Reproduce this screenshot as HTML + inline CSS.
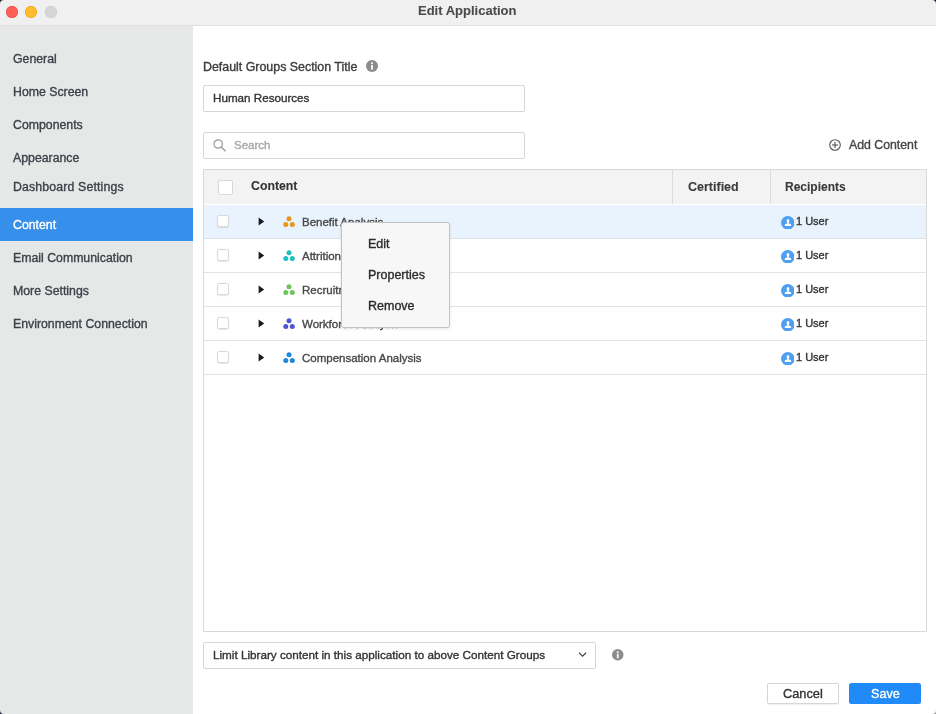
<!DOCTYPE html>
<html><head><meta charset="utf-8"><style>
html,body{margin:0;padding:0;width:936px;height:714px;overflow:hidden;background:#1f2233;}
#w{position:relative;width:936px;height:714px;overflow:hidden;background:#fff;font-family:"Liberation Sans",sans-serif;}
.a{position:absolute;}
.t{position:absolute;white-space:nowrap;line-height:20px;height:20px;will-change:transform;-webkit-text-stroke:0.35px currentColor;}
</style></head><body><div id="w">
<div class="a" style="left:0px;top:0px;width:936px;height:25px;background:#f1f0f1"></div>
<div class="a" style="left:0px;top:25px;width:936px;height:1px;background:#e0dfe0"></div>
<div class="a" style="left:5.60px;top:5.50px;width:12px;height:12px;border-radius:50%;background:#fe5f57;box-shadow:inset 0 0 0 0.5px #e2463f"></div>
<div class="a" style="left:25.20px;top:5.50px;width:12px;height:12px;border-radius:50%;background:#febc2e;box-shadow:inset 0 0 0 0.5px #e1a116"></div>
<div class="a" style="left:44.90px;top:5.50px;width:12px;height:12px;border-radius:50%;background:#d7d6d7;box-shadow:inset 0 0 0 0.5px #c8c7c8"></div>
<div class="t" style="left:417.60px;top:1.20px;font-size:13px;color:#4b4b4b;font-weight:bold;-webkit-text-stroke:0.1px #4b4b4b">Edit Application</div>
<div class="a" style="left:0px;top:26px;width:193px;height:688px;background:#e6e7e7"></div>
<div class="a" style="left:0px;top:208px;width:193px;height:32.5px;background:#3690eb"></div>
<div class="t" style="left:13.00px;top:48.74px;font-size:12.3px;color:#3d4048;font-weight:normal;">General</div>
<div class="t" style="left:13.00px;top:81.94px;font-size:12.3px;color:#3d4048;font-weight:normal;">Home Screen</div>
<div class="t" style="left:13.00px;top:115.04px;font-size:12.3px;color:#3d4048;font-weight:normal;">Components</div>
<div class="t" style="left:13.00px;top:147.94px;font-size:12.3px;color:#3d4048;font-weight:normal;">Appearance</div>
<div class="t" style="left:13.00px;top:177.14px;font-size:12.3px;color:#3d4048;font-weight:normal;letter-spacing:0.15px">Dashboard Settings</div>
<div class="t" style="left:13.00px;top:214.74px;font-size:12.3px;color:#ffffff;font-weight:normal;">Content</div>
<div class="t" style="left:13.00px;top:247.94px;font-size:12.3px;color:#3d4048;font-weight:normal;">Email Communication</div>
<div class="t" style="left:13.00px;top:280.84px;font-size:12.3px;color:#3d4048;font-weight:normal;">More Settings</div>
<div class="t" style="left:13.00px;top:314.24px;font-size:12.3px;color:#3d4048;font-weight:normal;">Environment Connection</div>
<div class="a" style="left:193px;top:26px;width:743px;height:688px;background:#ffffff"></div>
<div class="t" style="left:202.90px;top:56.60px;font-size:12.4px;color:#3b3b3b;font-weight:normal;">Default Groups Section Title</div>
<svg class="a" style="left:365.50px;top:60.00px" width="12" height="12" viewBox="0 0 12 12"><circle cx="6" cy="6" r="6" fill="#8c8c8c"/><circle cx="6" cy="3.3" r="1" fill="#fff"/><rect x="5.1" y="5" width="1.8" height="4.6" fill="#fff"/></svg>
<div class="a" style="left:203px;top:85px;width:322px;height:27px;border:1px solid #d6d6d6;border-radius:2px;box-sizing:border-box"></div>
<div class="t" style="left:213.20px;top:88.36px;font-size:11.65px;color:#333;font-weight:normal;">Human Resources</div>
<div class="a" style="left:203px;top:132px;width:322px;height:27px;border:1px solid #d6d6d6;border-radius:2px;box-sizing:border-box"></div>
<svg class="a" style="left:211px;top:137px" width="18" height="18" viewBox="0 0 18 18"><circle cx="7.2" cy="7" r="4.2" fill="none" stroke="#9b9b9b" stroke-width="1.2"/><line x1="10.2" y1="10.1" x2="14.6" y2="14.2" stroke="#9b9b9b" stroke-width="1.3"/></svg>
<div class="t" style="left:233.70px;top:135.02px;font-size:11.5px;color:#a6a6a6;font-weight:normal;">Search</div>
<svg class="a" style="left:829px;top:139px" width="12" height="12" viewBox="0 0 12 12"><circle cx="6" cy="6" r="5.3" fill="none" stroke="#555" stroke-width="1.1"/><line x1="6" y1="3" x2="6" y2="9" stroke="#555" stroke-width="1.1"/><line x1="3" y1="6" x2="9" y2="6" stroke="#555" stroke-width="1.1"/></svg>
<div class="t" style="left:848.70px;top:134.94px;font-size:12.3px;color:#474747;font-weight:normal;">Add Content</div>
<div class="a" style="left:203px;top:169px;width:724px;height:463px;border:1px solid #d9d9d9;box-sizing:border-box"></div>
<div class="a" style="left:204px;top:170px;width:722px;height:34px;background:#f3f3f3"></div>
<div class="a" style="left:672px;top:170px;width:1px;height:33.5px;background:#dadada"></div>
<div class="a" style="left:769.5px;top:170px;width:1.0px;height:33.5px;background:#dadada"></div>
<div class="a" style="left:218px;top:179.5px;width:15px;height:15.0px;background:#fff;border:1px solid #d8d8d8;border-radius:2px;box-sizing:border-box"></div>
<div class="t" style="left:251.30px;top:175.54px;font-size:12.3px;color:#333;font-weight:bold;-webkit-text-stroke:0.1px #333">Content</div>
<div class="t" style="left:687.50px;top:176.77px;font-size:12.5px;color:#3a3a3a;font-weight:bold;-webkit-text-stroke:0.1px #3a3a3a">Certified</div>
<div class="t" style="left:785.30px;top:176.94px;font-size:12px;color:#3a3a3a;font-weight:bold;-webkit-text-stroke:0.1px #3a3a3a">Recipients</div>
<div class="a" style="left:204px;top:205px;width:722px;height:33px;background:#e9f3fd"></div>
<div class="a" style="left:204px;top:238px;width:722px;height:1px;background:#d9e3ec"></div>
<div class="a" style="left:217.3px;top:215.2px;width:11.699999999999989px;height:12.0px;background:#fff;border:1px solid #d8d8d8;border-radius:2.5px;box-sizing:border-box;box-shadow:0 0.5px 1.2px rgba(0,0,0,0.10)"></div>
<svg class="a" style="left:258px;top:217px" width="7" height="9" viewBox="0 0 7 9"><path d="M0.6 0.5 L6.2 4.5 L0.6 8.5 Z" fill="#1b1b1b"/></svg>
<svg class="a" style="left:282px;top:215px" width="14" height="13" viewBox="0 0 14 13"><circle cx="7" cy="3.8" r="2.5" fill="#e8951c"/><circle cx="3.8" cy="9.6" r="2.5" fill="#e8951c"/><circle cx="10.3" cy="9.6" r="2.5" fill="#e8951c"/></svg>
<div class="t" style="left:302.30px;top:211.92px;font-size:11.5px;color:#474747;font-weight:normal;">Benefit Analysis</div>
<svg class="a" style="left:780.7px;top:215.5px" width="13.6" height="13.6" viewBox="0 0 14 14"><circle cx="7" cy="7" r="7" fill="#4f9ff0"/><ellipse cx="7.2" cy="5" rx="1.45" ry="1.85" fill="#fff"/><rect x="6.4" y="6" width="1.6" height="2" fill="#fff"/><path d="M3.9 10.2 V9.3 C3.9 8.4 5 8 6.3 7.8 H8.1 C9.4 8 10.4 8.4 10.4 9.3 V10.2 Z" fill="#fff"/></svg>
<div class="t" style="left:796.20px;top:211.09px;font-size:11px;color:#333;font-weight:normal;">1 User</div>
<div class="a" style="left:204px;top:272px;width:722px;height:1px;background:#e3e3e3"></div>
<div class="a" style="left:217.3px;top:249.2px;width:11.699999999999989px;height:12.0px;background:#fff;border:1px solid #d8d8d8;border-radius:2.5px;box-sizing:border-box;box-shadow:0 0.5px 1.2px rgba(0,0,0,0.10)"></div>
<svg class="a" style="left:258px;top:251px" width="7" height="9" viewBox="0 0 7 9"><path d="M0.6 0.5 L6.2 4.5 L0.6 8.5 Z" fill="#1b1b1b"/></svg>
<svg class="a" style="left:282px;top:249px" width="14" height="13" viewBox="0 0 14 13"><circle cx="7" cy="3.8" r="2.5" fill="#20bfc3"/><circle cx="3.8" cy="9.6" r="2.5" fill="#20bfc3"/><circle cx="10.3" cy="9.6" r="2.5" fill="#20bfc3"/></svg>
<div class="t" style="left:302.30px;top:245.92px;font-size:11.5px;color:#474747;font-weight:normal;">Attrition Analysis</div>
<svg class="a" style="left:780.7px;top:249.5px" width="13.6" height="13.6" viewBox="0 0 14 14"><circle cx="7" cy="7" r="7" fill="#4f9ff0"/><ellipse cx="7.2" cy="5" rx="1.45" ry="1.85" fill="#fff"/><rect x="6.4" y="6" width="1.6" height="2" fill="#fff"/><path d="M3.9 10.2 V9.3 C3.9 8.4 5 8 6.3 7.8 H8.1 C9.4 8 10.4 8.4 10.4 9.3 V10.2 Z" fill="#fff"/></svg>
<div class="t" style="left:796.20px;top:245.09px;font-size:11px;color:#333;font-weight:normal;">1 User</div>
<div class="a" style="left:204px;top:306px;width:722px;height:1px;background:#e3e3e3"></div>
<div class="a" style="left:217.3px;top:283.2px;width:11.699999999999989px;height:12.0px;background:#fff;border:1px solid #d8d8d8;border-radius:2.5px;box-sizing:border-box;box-shadow:0 0.5px 1.2px rgba(0,0,0,0.10)"></div>
<svg class="a" style="left:258px;top:285px" width="7" height="9" viewBox="0 0 7 9"><path d="M0.6 0.5 L6.2 4.5 L0.6 8.5 Z" fill="#1b1b1b"/></svg>
<svg class="a" style="left:282px;top:283px" width="14" height="13" viewBox="0 0 14 13"><circle cx="7" cy="3.8" r="2.5" fill="#6ec35a"/><circle cx="3.8" cy="9.6" r="2.5" fill="#6ec35a"/><circle cx="10.3" cy="9.6" r="2.5" fill="#6ec35a"/></svg>
<div class="t" style="left:302.30px;top:279.92px;font-size:11.5px;color:#474747;font-weight:normal;">Recruitment Analysis</div>
<svg class="a" style="left:780.7px;top:283.5px" width="13.6" height="13.6" viewBox="0 0 14 14"><circle cx="7" cy="7" r="7" fill="#4f9ff0"/><ellipse cx="7.2" cy="5" rx="1.45" ry="1.85" fill="#fff"/><rect x="6.4" y="6" width="1.6" height="2" fill="#fff"/><path d="M3.9 10.2 V9.3 C3.9 8.4 5 8 6.3 7.8 H8.1 C9.4 8 10.4 8.4 10.4 9.3 V10.2 Z" fill="#fff"/></svg>
<div class="t" style="left:796.20px;top:279.09px;font-size:11px;color:#333;font-weight:normal;">1 User</div>
<div class="a" style="left:204px;top:340px;width:722px;height:1px;background:#e3e3e3"></div>
<div class="a" style="left:217.3px;top:317.2px;width:11.699999999999989px;height:12.0px;background:#fff;border:1px solid #d8d8d8;border-radius:2.5px;box-sizing:border-box;box-shadow:0 0.5px 1.2px rgba(0,0,0,0.10)"></div>
<svg class="a" style="left:258px;top:319px" width="7" height="9" viewBox="0 0 7 9"><path d="M0.6 0.5 L6.2 4.5 L0.6 8.5 Z" fill="#1b1b1b"/></svg>
<svg class="a" style="left:282px;top:317px" width="14" height="13" viewBox="0 0 14 13"><circle cx="7" cy="3.8" r="2.5" fill="#4b55d6"/><circle cx="3.8" cy="9.6" r="2.5" fill="#4b55d6"/><circle cx="10.3" cy="9.6" r="2.5" fill="#4b55d6"/></svg>
<div class="t" style="left:302.30px;top:313.92px;font-size:11.5px;color:#474747;font-weight:normal;">Workforce Analysis</div>
<svg class="a" style="left:780.7px;top:317.5px" width="13.6" height="13.6" viewBox="0 0 14 14"><circle cx="7" cy="7" r="7" fill="#4f9ff0"/><ellipse cx="7.2" cy="5" rx="1.45" ry="1.85" fill="#fff"/><rect x="6.4" y="6" width="1.6" height="2" fill="#fff"/><path d="M3.9 10.2 V9.3 C3.9 8.4 5 8 6.3 7.8 H8.1 C9.4 8 10.4 8.4 10.4 9.3 V10.2 Z" fill="#fff"/></svg>
<div class="t" style="left:796.20px;top:313.09px;font-size:11px;color:#333;font-weight:normal;">1 User</div>
<div class="a" style="left:204px;top:374px;width:722px;height:1px;background:#e3e3e3"></div>
<div class="a" style="left:217.3px;top:351.2px;width:11.699999999999989px;height:12.0px;background:#fff;border:1px solid #d8d8d8;border-radius:2.5px;box-sizing:border-box;box-shadow:0 0.5px 1.2px rgba(0,0,0,0.10)"></div>
<svg class="a" style="left:258px;top:353px" width="7" height="9" viewBox="0 0 7 9"><path d="M0.6 0.5 L6.2 4.5 L0.6 8.5 Z" fill="#1b1b1b"/></svg>
<svg class="a" style="left:282px;top:351px" width="14" height="13" viewBox="0 0 14 13"><circle cx="7" cy="3.8" r="2.5" fill="#1e88d8"/><circle cx="3.8" cy="9.6" r="2.5" fill="#1e88d8"/><circle cx="10.3" cy="9.6" r="2.5" fill="#1e88d8"/></svg>
<div class="t" style="left:302.30px;top:347.92px;font-size:11.5px;color:#474747;font-weight:normal;">Compensation Analysis</div>
<svg class="a" style="left:780.7px;top:351.5px" width="13.6" height="13.6" viewBox="0 0 14 14"><circle cx="7" cy="7" r="7" fill="#4f9ff0"/><ellipse cx="7.2" cy="5" rx="1.45" ry="1.85" fill="#fff"/><rect x="6.4" y="6" width="1.6" height="2" fill="#fff"/><path d="M3.9 10.2 V9.3 C3.9 8.4 5 8 6.3 7.8 H8.1 C9.4 8 10.4 8.4 10.4 9.3 V10.2 Z" fill="#fff"/></svg>
<div class="t" style="left:796.20px;top:347.09px;font-size:11px;color:#333;font-weight:normal;">1 User</div>
<div class="a" style="left:341px;top:222px;width:109px;height:106px;background:#f7f7f7;border:1px solid #c2c2c2;border-radius:3px;box-sizing:border-box;box-shadow:0 1px 3px rgba(0,0,0,0.10)"></div>
<div class="t" style="left:368.10px;top:233.77px;font-size:12.5px;color:#2b2b2b;font-weight:normal;">Edit</div>
<div class="t" style="left:368.10px;top:265.37px;font-size:12.5px;color:#2b2b2b;font-weight:normal;">Properties</div>
<div class="t" style="left:368.10px;top:296.47px;font-size:12.5px;color:#2b2b2b;font-weight:normal;">Remove</div>
<div class="a" style="left:203px;top:642px;width:393px;height:26.5px;border:1px solid #d6d6d6;border-radius:2px;box-sizing:border-box"></div>
<div class="t" style="left:213.00px;top:645.05px;font-size:11.7px;color:#333;font-weight:normal;">Limit Library content in this application to above Content Groups</div>
<svg class="a" style="left:578px;top:651px" width="9" height="7" viewBox="0 0 9 7"><path d="M1 1.8 L4.5 5.2 L8 1.8" fill="none" stroke="#444" stroke-width="1.2"/></svg>
<svg class="a" style="left:612.25px;top:649.25px" width="11.5" height="11.5" viewBox="0 0 12 12"><circle cx="6" cy="6" r="6" fill="#8c8c8c"/><circle cx="6" cy="3.3" r="1" fill="#fff"/><rect x="5.1" y="5" width="1.8" height="4.6" fill="#fff"/></svg>
<div class="a" style="left:767px;top:683px;width:72px;height:21px;background:#fff;border:1px solid #d6d6d6;border-radius:2px;box-sizing:border-box;box-shadow:0 0.5px 1px rgba(0,0,0,0.06)"></div>
<div class="t" style="left:783.20px;top:684.16px;font-size:12.8px;color:#333;font-weight:normal;">Cancel</div>
<div class="a" style="left:849px;top:683px;width:72px;height:21px;background:#1f8af8;border-radius:2.5px"></div>
<div class="t" style="left:871.20px;top:684.23px;font-size:12.6px;color:#ffffff;font-weight:normal;">Save</div>
<svg class="a" style="left:0;top:0" width="936" height="714"><path d="M0 0 H4 A4 4 0 0 0 0 4 Z" fill="#1f2233"/><path d="M936 0 H932 A4 4 0 0 1 936 4 Z" fill="#1f2233"/><path d="M0 714 V710 A4 4 0 0 0 4 714 Z" fill="#1f2233"/><path d="M936 714 V710 A4 4 0 0 1 932 714 Z" fill="#9a9a9a"/></svg>
</div></body></html>
